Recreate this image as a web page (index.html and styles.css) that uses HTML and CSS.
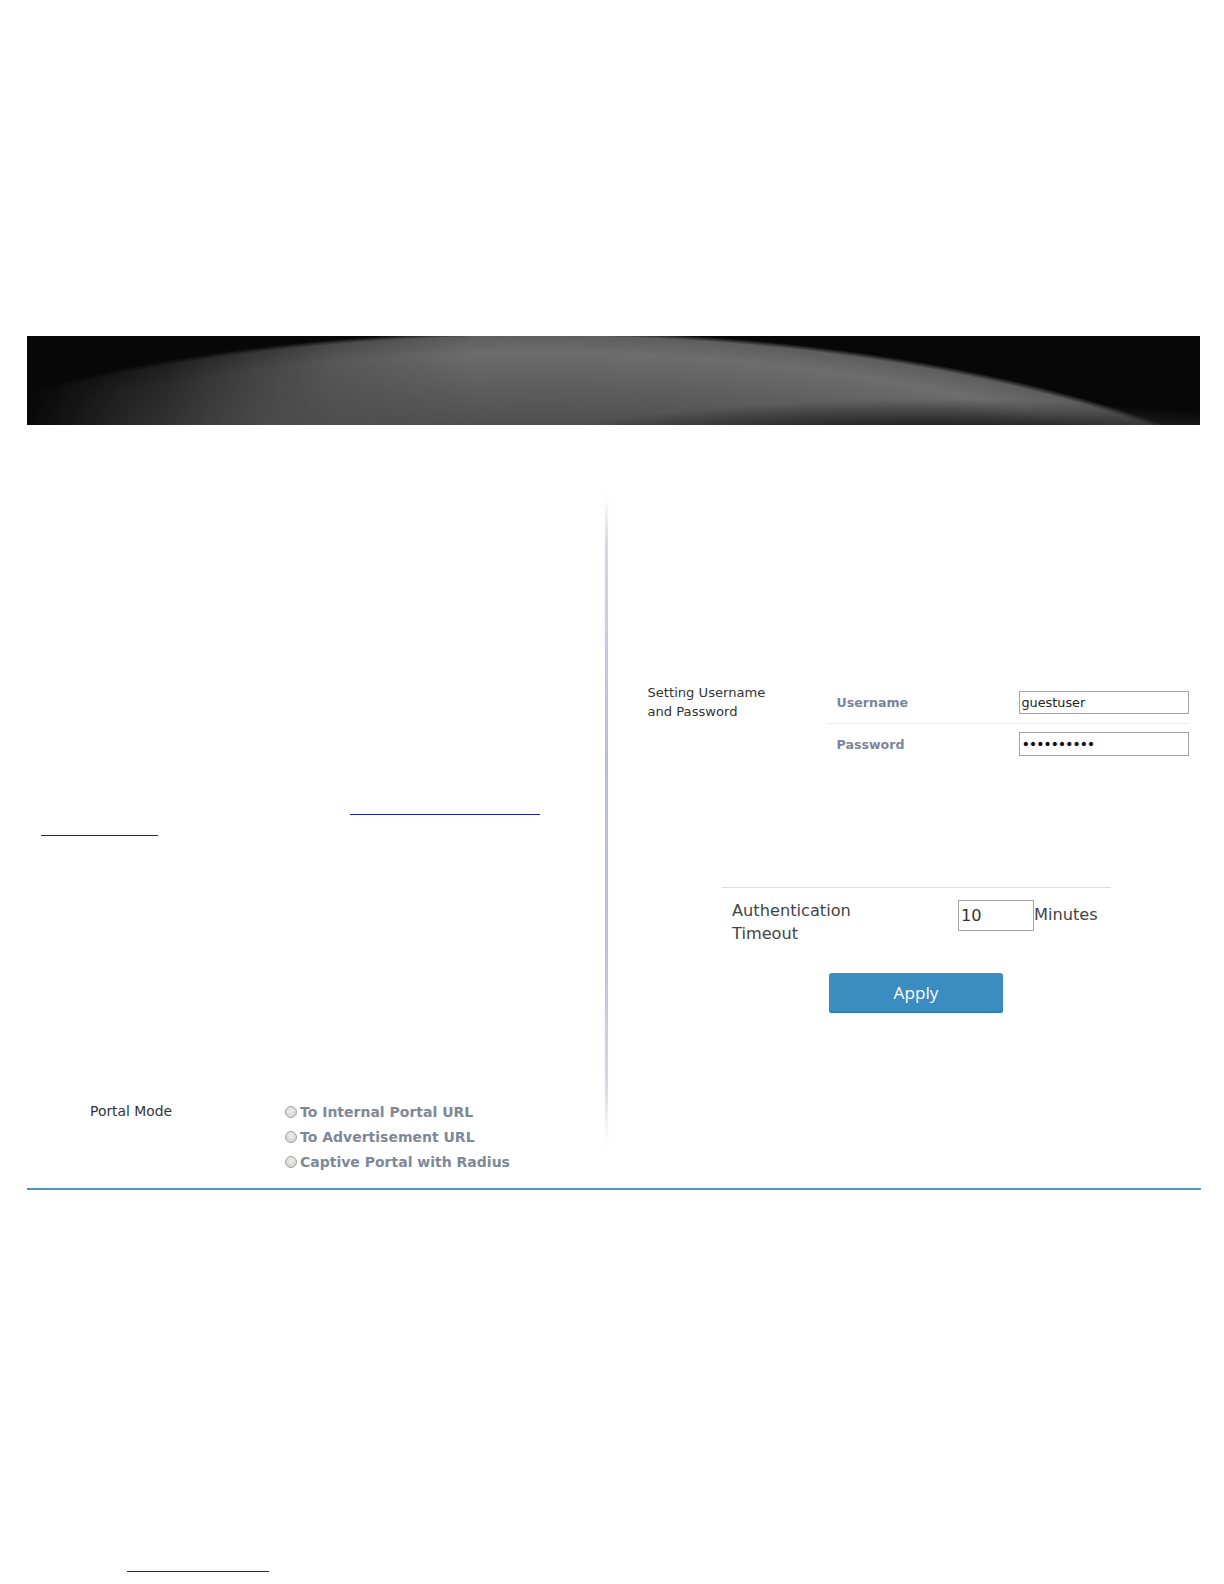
FILE: index.html
```html
<!DOCTYPE html>
<html lang="en">
<head>
<meta charset="utf-8">
<title>Captive Portal</title>
<link rel="stylesheet" href="styles.css">
</head>
<body>
<div class="page">
  <div class="banner"></div>

  <div class="content">
    <div class="col-left">
      <div class="links">
        <div class="link-row row-a"><a class="link-line" href="#"></a></div>
        <div class="link-row row-b"><a class="link-line short" href="#"></a></div>
      </div>

      <div class="portal">
        <div class="portal-label">Portal Mode</div>
        <div class="portal-options">
          <label class="opt"><input type="radio" name="mode" class="radio">To Internal Portal URL</label>
          <label class="opt"><input type="radio" name="mode" class="radio">To Advertisement URL</label>
          <label class="opt"><input type="radio" name="mode" class="radio">Captive Portal with Radius</label>
        </div>
      </div>
    </div>

    <div class="separator"></div>

    <div class="col-right">
      <div class="cred">
        <div class="cred-label">Setting Username<br>and Password</div>
        <div class="cred-table">
          <div class="cred-row first">
            <span class="cred-name">Username</span>
            <input class="field" type="text" value="guestuser">
          </div>
          <div class="cred-row">
            <span class="cred-name">Password</span>
            <input class="field secret" type="password" value="guestpass1">
          </div>
        </div>
      </div>

      <div class="auth">
        <div class="auth-row">
          <div class="auth-label">Authentication<br>Timeout</div>
          <input class="auth-input" type="text" value="10">
          <span class="auth-unit">Minutes</span>
        </div>
      </div>

      <button class="apply" type="button">Apply</button>
    </div>
  </div>

  <div class="footer">
    <a class="link-line foot" href="#"></a>
  </div>
</div>
</body>
</html>
```

FILE: styles.css
```css
html, body {
  margin: 0;
  padding: 0;
  background: #ffffff;
}

body {
  font-family: "DejaVu Sans", Verdana, sans-serif;
  color: #333333;
  width: 1224px;
  height: 1584px;
  overflow: hidden;
}

.page {
  width: 1224px;
  padding-top: 336px;
  box-sizing: border-box;
}

/* banner */
.banner {
  position: relative;
  overflow: hidden;
  margin: 0 24px 0 27px;
  height: 89px;
  background-color: #070707;
  background-image:
    linear-gradient(90deg, rgba(7,7,7,0.85) 0%, rgba(7,7,7,0.35) 8%, rgba(7,7,7,0) 20%),
    radial-gradient(ellipse 560px 150px at 420px 150px, #4c4c4c 0%, #404040 45%, rgba(40,40,40,0) 100%);
}

.banner::before {
  content: "";
  position: absolute;
  inset: 0;
  background-image:
    radial-gradient(ellipse 640px 140px at 915px 203px, #202020 0%, #262626 82%, rgba(38,38,38,0) 100%),
    radial-gradient(ellipse 872px 308px at 512px 303px, #3c3c3c 0%, #484848 64%, #5e5e5e 82%, #6d6d6d 93%, #5e5e5e 98.5%, rgba(30,30,30,0) 100%);
  -webkit-mask-image: linear-gradient(90deg, rgba(0,0,0,0) 0%, rgba(0,0,0,0.25) 12%, rgba(0,0,0,0.75) 26%, #000000 38%);
  mask-image: linear-gradient(90deg, rgba(0,0,0,0) 0%, rgba(0,0,0,0.25) 12%, rgba(0,0,0,0.75) 26%, #000000 38%);
}

.content {
  margin: 0 23px 0 27px;
  display: grid;
  grid-template-columns: 578px 3px 1fr;
  border-bottom: 2px solid #4f92ca;
}

/* left column */
.col-left {
  padding-top: 369px;
  padding-bottom: 13.5px;
}

.link-row {
  height: 21.2px;
  display: flex;
  align-items: flex-end;
}

.row-a { padding-left: 323px; }
.row-b { padding-left: 14px; }

.link-line {
  display: block;
  width: 190px;
  height: 0;
  border-bottom: 1.7px solid #1f1fa6;
}

.link-line.short { width: 117px; }

.portal {
  margin-top: 262.5px;
  display: flex;
  padding-left: 63px;
}

.portal-label {
  width: 195px;
  font-size: 13.9px;
  line-height: 25.25px;
  color: #333333;
}

.portal-options {
  display: flex;
  flex-direction: column;
}

.opt {
  display: flex;
  align-items: center;
  height: 25.25px;
  font-size: 14px;
  font-weight: bold;
  color: #7e8898;
}

.radio {
  appearance: none;
  -webkit-appearance: none;
  width: 12px;
  height: 12px;
  margin: 0 3px 0 0;
  border: 1px solid #a3a3a3;
  border-radius: 50%;
  background: radial-gradient(circle at 50% 40%, #eeeeee 0%, #d6d6d6 70%, #c8c8c8 100%);
  box-sizing: border-box;
}

/* separator */
.separator {
  margin-top: 70px;
  margin-bottom: 43px;
  background: linear-gradient(180deg, rgba(214,218,228,0) 0%, #d2d7e2 8%, #b7bfd2 40%, #bac2d4 70%, #d2d7e2 90%, rgba(220,224,232,0) 100%);
  box-shadow: 0 0 1px rgba(190,198,215,0.6);
  width: 3px;
}

/* right column */
.col-right {
  padding-top: 257.5px;
}

.cred {
  display: flex;
  margin-left: 39.5px;
}

.cred-label {
  width: 180px;
  font-size: 13.1px;
  line-height: 19.2px;
  color: #333333;
}

.cred-table {
  width: 361.5px;
}

.cred-row {
  display: flex;
  align-items: center;
  height: 40.4px;
}

.cred-row.first {
  border-bottom: 1px solid #ececec;
}

.cred-name {
  width: 182px;
  padding-left: 9px;
  font-size: 12.6px;
  font-weight: bold;
  color: #7b869a;
}

.field {
  width: 170.5px;
  height: 23.3px;
  box-sizing: border-box;
  margin: 0;
  padding: 0 2px;
  border: 1px solid #a4a4a4;
  font-family: "DejaVu Sans", Verdana, sans-serif;
  font-size: 12.8px;
  color: #222222;
  background: #ffffff;
  outline: none;
}

.field.secret {
  font-size: 14.5px;
  letter-spacing: -1.3px;
  color: #111111;
}

.auth {
  margin: 123px 0 0 114px;
  width: 389px;
  border-top: 1px solid #dcdcdc;
  padding: 11px 0 0 10px;
  box-sizing: border-box;
}

.auth-row {
  display: flex;
  align-items: flex-start;
}

.auth-label {
  width: 226px;
  font-size: 16.2px;
  line-height: 23.2px;
  color: #444444;
}

.auth-input {
  width: 76px;
  height: 30.3px;
  box-sizing: border-box;
  margin: 1px 0 0 0;
  padding: 0 2px;
  border: 1px solid #a4a4a4;
  font-family: "DejaVu Sans", Verdana, sans-serif;
  font-size: 16.2px;
  color: #333333;
  outline: none;
}

.auth-unit {
  font-size: 16.2px;
  line-height: 30.3px;
  margin-top: 1px;
  color: #444444;
}

.apply {
  display: block;
  margin: 27.5px 0 0 221px;
  width: 174px;
  height: 39.5px;
  border: none;
  border-radius: 3px;
  background: #3b8cc0;
  box-shadow: inset 0 -2px 0 #357fae;
  color: #ffffff;
  font-family: "Open Sans", sans-serif;
  font-size: 17.2px;
  padding: 0;
}

/* footer */
.footer {
  padding: 381px 0 0 127px;
}

.link-line.foot {
  width: 141.5px;
}
```
